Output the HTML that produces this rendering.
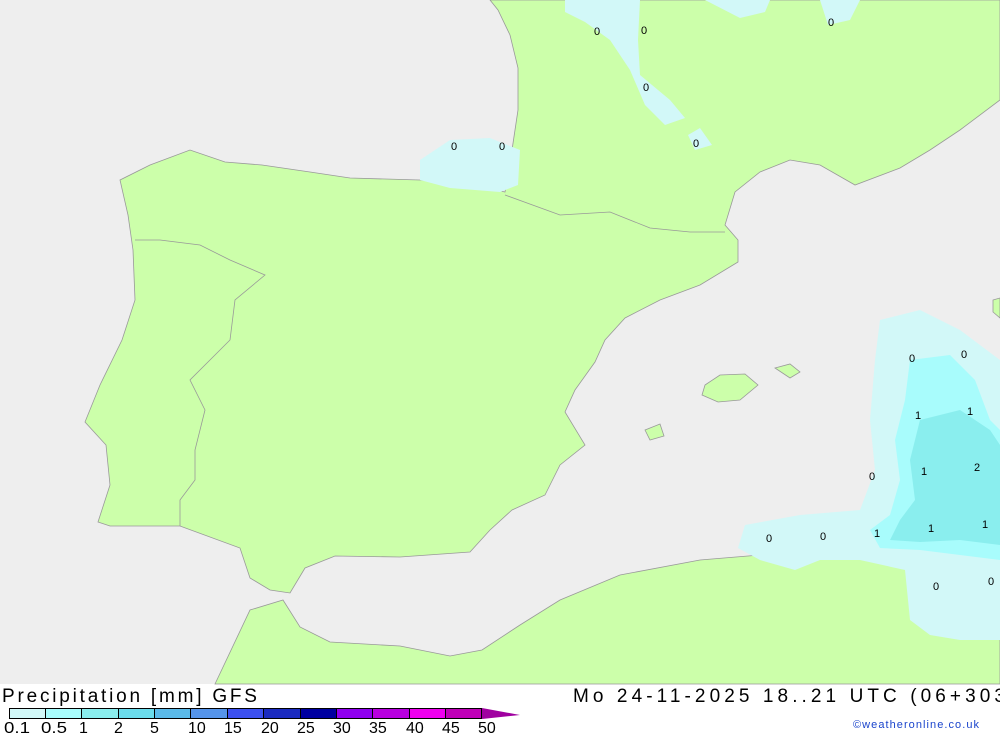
<!DOCTYPE html>
<html><head><style>
body{margin:0;width:1000px;height:733px;overflow:hidden;background:#fff;font-family:"Liberation Sans",sans-serif}
svg{position:absolute;left:0;top:0}
</style></head><body>
<svg width="1000" height="733" viewBox="0 0 1000 733">
<rect x="0" y="0" width="1000" height="684" fill="#eeeeee"/>
<g fill="#ccffaa" stroke="#999" stroke-width="0.8">
<path d="M490,0 L1000,0 L1000,100 L960,130 L930,150 L900,168 L855,185 L820,165 L790,160 L760,172 L735,192 L725,225 L738,240 L738,262 L700,285 L660,300 L625,318 L605,340 L595,362 L575,390 L565,412 L585,445 L560,465 L545,495 L512,510 L490,530 L470,552 L400,557 L335,556 L305,568 L290,593 L270,590 L250,578 L240,548 L180,526 L110,526 L98,522 L110,485 L106,445 L85,422 L100,385 L122,340 L135,300 L133,250 L128,215 L120,180 L150,165 L190,150 L225,162 L262,165 L310,172 L350,178 L420,180 L480,186 L505,192 L512,150 L518,110 L518,68 L510,35 L498,10 Z"/>
<path d="M215,684 L250,610 L283,600 L300,627 L330,642 L400,646 L450,656 L482,650 L520,625 L560,600 L620,575 L700,560 L760,555 L830,545 L900,530 L1000,520 L1000,684 Z"/>
<path d="M705,385 L720,375 L745,374 L758,385 L740,400 L718,402 L702,395 Z"/>
<path d="M775,368 L790,364 L800,372 L790,378 Z"/>
<path d="M645,430 L660,424 L664,436 L650,440 Z"/>
<path d="M993,300 L1000,298 L1000,318 L993,312 Z"/>
</g>
<g fill="none" stroke="#999" stroke-width="0.8">
<path d="M505,195 L560,215 L610,212 L650,228 L690,232 L725,232"/>
<path d="M135,240 L160,240 L200,245 L230,260 L265,275 L235,300 L230,340 L215,355 L190,380 L205,410 L195,450 L195,480 L180,500 L180,526"/>
</g>
<g>
<path d="M420,160 L450,140 L490,138 L520,150 L518,185 L500,192 L450,188 L420,180 Z" fill="#d2f8f8"/>
<path d="M565,0 L640,0 L638,40 L640,75 L670,100 L685,118 L665,125 L645,105 L630,70 L610,40 L585,22 L565,12 Z" fill="#d2f8f8"/>
<path d="M688,135 L700,128 L712,145 L695,150 Z" fill="#d2f8f8"/>
<path d="M705,0 L770,0 L765,12 L740,18 Z" fill="#d2f8f8"/>
<path d="M820,0 L860,0 L850,20 L828,25 Z" fill="#d2f8f8"/>
<path d="M880,320 L920,310 L960,330 L1000,360 L1000,640 L960,640 L930,635 L910,620 L905,570 L860,560 L820,560 L795,570 L760,560 L738,548 L745,525 L800,515 L860,510 L875,470 L870,420 L875,360 Z" fill="#d2f8f8"/>
<path d="M910,360 L950,355 L975,380 L990,420 L1000,430 L1000,560 L960,555 L920,550 L880,548 L870,530 L890,515 L900,480 L895,440 L905,400 Z" fill="#a8fcfc"/>
<path d="M920,420 L960,410 L990,430 L1000,445 L1000,545 L960,540 L920,542 L890,540 L900,520 L915,500 L910,460 Z" fill="#8aeeee"/>
</g>
<g font-size="11" fill="#000" text-anchor="middle" font-family="Liberation Sans,sans-serif">
<text x="597" y="35">0</text><text x="644" y="34">0</text><text x="646" y="91">0</text>
<text x="831" y="26">0</text><text x="454" y="150">0</text><text x="502" y="150">0</text><text x="696" y="147">0</text>
<text x="912" y="362">0</text><text x="964" y="358">0</text><text x="918" y="419">1</text><text x="970" y="415">1</text>
<text x="872" y="480">0</text><text x="924" y="475">1</text><text x="977" y="471">2</text>
<text x="769" y="542">0</text><text x="823" y="540">0</text><text x="877" y="537">1</text><text x="931" y="532">1</text><text x="985" y="528">1</text>
<text x="936" y="590">0</text><text x="991" y="585">0</text>
</g>
<g stroke="#000" stroke-width="1">
<rect x="9.5" y="708.5" width="36" height="10" fill="#d2f8f8"/>
<rect x="45.5" y="708.5" width="36" height="10" fill="#a8fcfc"/>
<rect x="81.5" y="708.5" width="37" height="10" fill="#8aeeee"/>
<rect x="118.5" y="708.5" width="36" height="10" fill="#6bdcec"/>
<rect x="154.5" y="708.5" width="36" height="10" fill="#5bbae9"/>
<rect x="190.5" y="708.5" width="37" height="10" fill="#5594ea"/>
<rect x="227.5" y="708.5" width="36" height="10" fill="#3c50f0"/>
<rect x="263.5" y="708.5" width="37" height="10" fill="#1b2bc0"/>
<rect x="300.5" y="708.5" width="36" height="10" fill="#0000a0"/>
<rect x="336.5" y="708.5" width="36" height="10" fill="#9000f0"/>
<rect x="372.5" y="708.5" width="37" height="10" fill="#b800e0"/>
<rect x="409.5" y="708.5" width="36" height="10" fill="#f000f0"/>
<rect x="445.5" y="708.5" width="36" height="10" fill="#c000b8"/>
</g>
<path d="M482,708 L520,715 L482,719 Z" fill="#a000a0"/>
<g font-size="16" fill="#000" font-family="Liberation Sans,sans-serif">
<text x="4" y="733" textLength="26" lengthAdjust="spacingAndGlyphs">0.1</text><text x="41" y="733" textLength="26" lengthAdjust="spacingAndGlyphs">0.5</text><text x="79" y="733">1</text><text x="114" y="733">2</text><text x="150" y="733">5</text>
<text x="188" y="733">10</text><text x="224" y="733">15</text><text x="261" y="733">20</text><text x="297" y="733">25</text><text x="333" y="733">30</text>
<text x="369" y="733">35</text><text x="406" y="733">40</text><text x="442" y="733">45</text><text x="478" y="733">50</text>
</g>
<text x="2" y="702" font-size="19" fill="#000" font-family="Liberation Sans,sans-serif" textLength="255" lengthAdjust="spacing">Precipitation [mm] GFS</text>
<text x="573" y="702" font-size="19" fill="#000" font-family="Liberation Sans,sans-serif" textLength="432" lengthAdjust="spacing">Mo 24-11-2025 18..21 UTC (06+303</text>
<text x="853" y="728" font-size="11" fill="#1a44cc" font-family="Liberation Sans,sans-serif" textLength="126" lengthAdjust="spacing">©weatheronline.co.uk</text>
</svg>
</body></html>
